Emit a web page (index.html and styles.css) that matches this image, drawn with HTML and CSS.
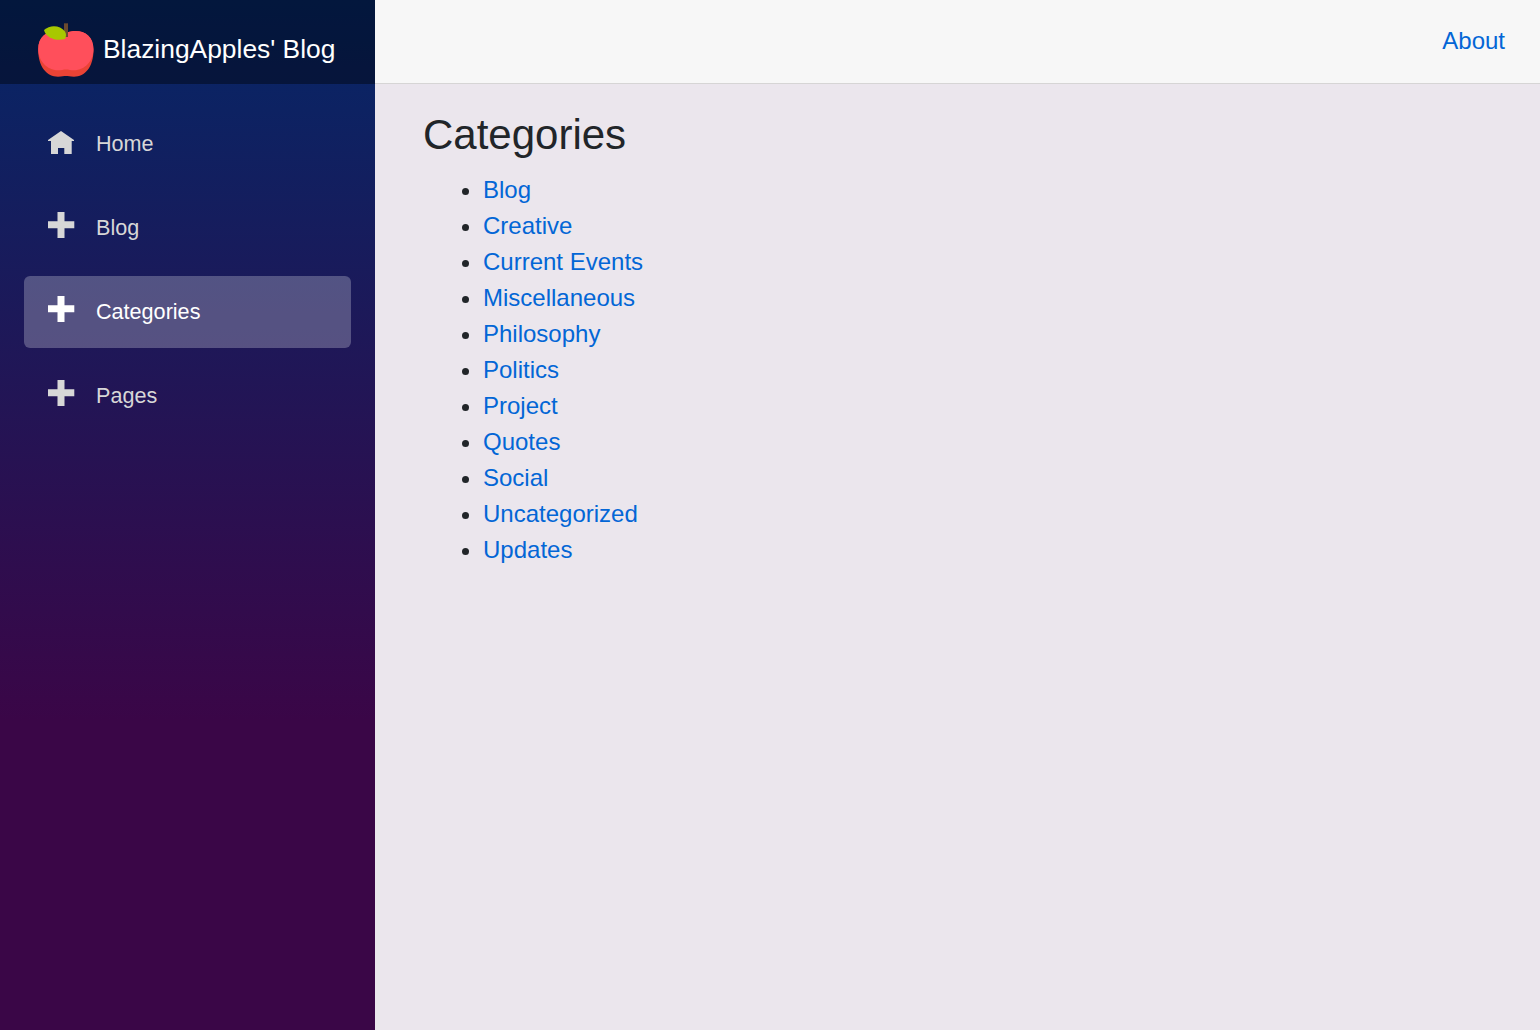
FILE: index.html
```html
<!DOCTYPE html>
<html lang="en">
<head>
<meta charset="utf-8">
<title>BlazingApples' Blog</title>
<link rel="stylesheet" href="styles.css">
</head>
<body>
<div class="page">
  <aside class="sidebar">
    <a class="brand">
      <svg class="apple" viewBox="0 0 60 60" aria-hidden="true">
        <path fill="#ea4335" d="M30 11.5C44 7 57.5 12 57.5 29C57.5 46 49 55.7 38 55.7C34 55.7 32 55 30 55C28 55 26 55.7 22 55.7C11 55.7 2.2 46 2.2 29C2.2 12 16 7 30 11.5Z"/>
        <path fill="#ff4f5b" d="M30 11.5C44 7 57.5 12 57.5 28C57.5 40 49 49 38 49.3C34 49.3 33 48.5 30 48.5C27 48.5 26 49.3 22 49.3C11 49 2.2 40 2.2 28C2.2 12 16 7 30 11.5Z"/>
        <path fill="#6b4a2e" d="M28 2.3h4V16h-4z"/>
        <path fill="#a8c800" d="M8 9C14 3.5 24 4 29 10.5Q31 14 29 18C20 20.5 10 17 8 9Z"/>
      </svg>
      <span>BlazingApples' Blog</span>
    </a>
    <nav class="nav">
      <a class="nav-link"><svg class="icon" viewBox="0 0 27 27"><path d="M13 3L26 12V13H23.7V26H16.3V20H10V26H3V13H0V12Z"/></svg>Home</a>
      <a class="nav-link"><svg class="icon" viewBox="0 0 27 27"><path d="M9.5 0h7v9.3h9.8v7h-9.8V26h-7v-9.7H0v-7h9.5z"/></svg>Blog</a>
      <a class="nav-link active"><svg class="icon" viewBox="0 0 27 27"><path d="M9.5 0h7v9.3h9.8v7h-9.8V26h-7v-9.7H0v-7h9.5z"/></svg>Categories</a>
      <a class="nav-link"><svg class="icon" viewBox="0 0 27 27"><path d="M9.5 0h7v9.3h9.8v7h-9.8V26h-7v-9.7H0v-7h9.5z"/></svg>Pages</a>
    </nav>
  </aside>
  <main class="main">
    <header class="top-row"><a class="link">About</a></header>
    <section class="content">
      <h1>Categories</h1>
      <ul>
        <li><a class="link">Blog</a></li>
        <li><a class="link">Creative</a></li>
        <li><a class="link">Current Events</a></li>
        <li><a class="link">Miscellaneous</a></li>
        <li><a class="link">Philosophy</a></li>
        <li><a class="link">Politics</a></li>
        <li><a class="link">Project</a></li>
        <li><a class="link">Quotes</a></li>
        <li><a class="link">Social</a></li>
        <li><a class="link">Uncategorized</a></li>
        <li><a class="link">Updates</a></li>
      </ul>
    </section>
  </main>
</div>
</body>
</html>
```
FILE: styles.css
```css
* { box-sizing: border-box; }
body {
  margin: 0;
  font: 24px/1.5 "Liberation Sans", Arial, sans-serif;
  color: #212529;
  background: #ebe6ed;
}
.page { display: flex; min-height: 100vh; }
.sidebar {
  width: 375px;
  flex: none;
  background: linear-gradient(180deg, rgb(5, 39, 103) 0%, #3a0647 70%);
}
.brand {
  display: flex;
  height: 84px;
  padding: 21px 0 0 36px;
  gap: 7px;
  background: rgba(0, 0, 0, 0.4);
  color: #fff;
  font-size: 26.4px;
  line-height: 56px;
  white-space: nowrap;
}
.apple { width: 60px; height: 60px; flex: none; }
.nav { display: flex; flex-direction: column; gap: 12px; padding: 24px; }
.nav-link {
  display: flex;
  height: 72px;
  padding-left: 24px;
  border-radius: 6px;
  color: #d7d7d7;
  font-size: 21.6px;
  line-height: 72px;
}
.active { background: rgba(255, 255, 255, 0.25); color: #fff; }
.icon { width: 27px; height: 27px; margin: 20px 21px 0 0; fill: currentColor; }
.main { flex: 1; }
.top-row {
  display: flex;
  justify-content: flex-end;
  height: 84px;
  padding: 23px 35px 0 0;
  background: #f7f7f7;
  border-bottom: 1px solid #d6d5d5;
}
.link { color: #0366d6; }
.content { padding: 26px 48px; }
h1 { margin: 0 0 12px; font-size: 42px; font-weight: 400; line-height: 50px; }
ul { margin: 0; padding-left: 60px; }
```
